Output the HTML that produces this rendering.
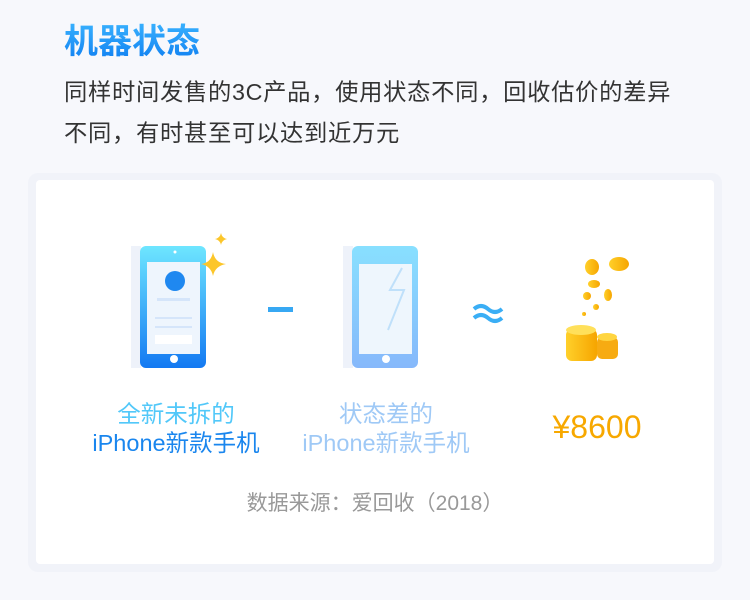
<!DOCTYPE html>
<html><head><meta charset="utf-8"><style>
body{margin:0;width:750px;height:600px;background:#f7f8fc;font-family:"Liberation Sans","Noto Sans CJK SC",sans-serif;position:relative;overflow:hidden}
.t{position:absolute;left:64px;top:20px;font-size:34px;font-weight:bold;background:linear-gradient(#3bb4ff,#0d7cf0);-webkit-background-clip:text;color:transparent;line-height:44px}
.d{position:absolute;left:64px;top:72px;font-size:23.3px;letter-spacing:0.7px;line-height:41px;color:#333;width:680px;white-space:nowrap}
.c1{position:absolute;left:28px;top:173px;width:694px;height:399px;background:#f1f3f9;border-radius:10px}
.c2{position:absolute;left:36px;top:180px;width:678px;height:384px;background:#fff;border-radius:4px}
.a{position:absolute;font-size:23.5px;text-align:center;line-height:29px;white-space:nowrap}
</style></head><body>
<div class="t">机器状态</div>
<div class="d">同样时间发售的3C产品，使用状态不同，回收估价的差异<br>不同，有时甚至可以达到近万元</div>
<div class="c1"></div><div class="c2"></div>
<svg style="position:absolute;left:0;top:0" width="750" height="600">
<defs>
<linearGradient id="p1" x1="0" y1="0" x2="0" y2="1"><stop offset="0" stop-color="#6ee6ff"/><stop offset="1" stop-color="#1379f2"/></linearGradient>
<linearGradient id="p2" x1="0" y1="0" x2="0" y2="1"><stop offset="0" stop-color="#88e0ff"/><stop offset="1" stop-color="#86b8fb"/></linearGradient>
<linearGradient id="g" x1="0" y1="0" x2="1" y2="0"><stop offset="0" stop-color="#ffd02a"/><stop offset="1" stop-color="#f6a500"/></linearGradient>
</defs>
<rect x="131" y="246" width="10" height="122" fill="#eef2fa"/>
<rect x="140" y="246" width="66" height="122" rx="6" fill="url(#p1)"/>
<rect x="147" y="262" width="53" height="92" fill="#eef5fd"/>
<circle cx="175" cy="281" r="10" fill="#1f88f0"/>
<rect x="157" y="298" width="33" height="3" fill="#d5e5fa"/>
<rect x="155" y="317" width="37" height="2" fill="#d5e5fa"/><rect x="155" y="326" width="37" height="2" fill="#d5e5fa"/>
<rect x="155" y="335" width="37" height="9" fill="#fff"/>
<circle cx="174" cy="359" r="4" fill="#fff"/><circle cx="175" cy="252" r="1.5" fill="#fff"/>
<path d="M213 252 Q215 263 226 264 Q215 266 213 276 Q211 266 201 264 Q211 263 213 252Z" fill="#fcc62a"/>
<path d="M221 233 Q222 238 227 239 Q222 240 221 245 Q220 240 215 239 Q220 238 221 233Z" fill="#fcc62a"/>
<rect x="268" y="307" width="25" height="5" fill="#37a8f3"/>
<rect x="343" y="246" width="10" height="122" fill="#eef2fa"/>
<rect x="352" y="246" width="66" height="122" rx="6" fill="url(#p2)"/>
<rect x="359" y="264" width="53" height="90" fill="#eef6fd"/>
<path d="M402 268 L390 290 L404 290 L388 330" stroke="#bfe0fa" stroke-width="2" fill="none"/>
<circle cx="386" cy="359" r="4" fill="#fff"/>
<path d="M474 309 q7-6 14 0 t14 0 M474 318 q7-6 14 0 t14 0" stroke="#3aaef5" stroke-width="4" fill="none"/>
<ellipse cx="592" cy="267" rx="7" ry="8" fill="url(#g)"/><ellipse cx="619" cy="264" rx="10" ry="7" fill="url(#g)"/>
<ellipse cx="594" cy="284" rx="6" ry="4" fill="url(#g)"/><ellipse cx="608" cy="295" rx="4" ry="6" fill="url(#g)"/>
<ellipse cx="587" cy="296" rx="4" ry="4" fill="url(#g)"/><ellipse cx="596" cy="307" rx="3" ry="3" fill="url(#g)"/><circle cx="584" cy="314" r="2" fill="url(#g)"/>
<rect x="597" y="337" width="21" height="22" rx="5" fill="#f7ab12"/><ellipse cx="607" cy="337" rx="10" ry="4" fill="#ffd540"/>
<rect x="566" y="329" width="31" height="32" rx="6" fill="url(#g)"/><ellipse cx="581" cy="330" rx="15" ry="5" fill="#ffe05a"/>
</svg>
<div class="a" style="left:90px;top:400px;width:172px;color:#52c8f9">全新未拆的<br><span style="color:#1a86ee">iPhone新款手机</span></div>
<div class="a" style="left:300px;top:400px;width:172px;color:#9fc9f6">状态差的<br>iPhone新款手机</div>
<div class="a" style="left:530px;top:409px;width:134px;font-size:32px;color:#f7a800;line-height:36px">¥8600</div>
<div class="a" style="left:36px;top:489px;width:678px;font-size:21px;color:#999">数据来源：爱回收（2018）</div>
</body></html>
